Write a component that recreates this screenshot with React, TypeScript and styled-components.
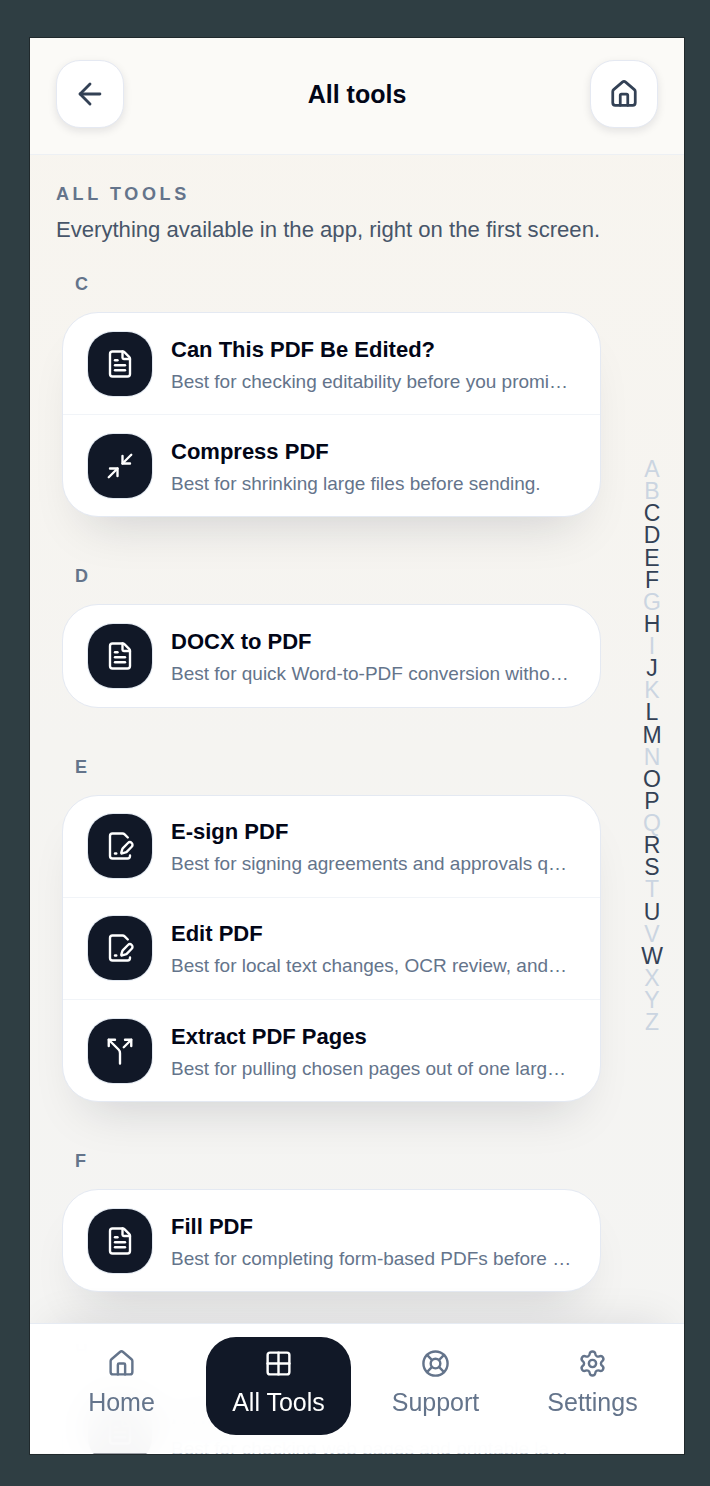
import { createGlobalStyle, styled } from "styled-components";
import {
  ArrowLeft,
  FilePenLine,
  FileText,
  Grid2x2,
  House,
  LifeBuoy,
  Minimize2,
  Settings,
  Split,
  type LucideIcon,
} from "lucide-react";

const GlobalStyle = createGlobalStyle`
  html, body {
    margin: 0;
    background: #2f3e43;
    font-family: "Liberation Sans", Arial, sans-serif;
  }
`;

const Page = styled.div`
  padding: 38px 26px 32px 30px;
`;

const Frame = styled.div`
  position: relative;
  height: 1416px;
  overflow: hidden;
  background: linear-gradient(180deg, #f8f5ef 0%, #f5f4f1 50%, #f4f4f3 100%);
  box-shadow: 0 0 0 1px #20292c;
`;

const Header = styled.header`
  height: 117px;
  box-sizing: border-box;
  padding: 0 26px 4px;
  display: flex;
  align-items: center;
  justify-content: space-between;
  background: #fbfaf7;
  border-bottom: 1.5px solid #edf0f4;
`;

const HeaderButton = styled.button`
  width: 68px;
  height: 68px;
  display: flex;
  align-items: center;
  justify-content: center;
  padding: 0;
  border: 1.5px solid #e5e9f2;
  border-radius: 24px;
  background: #fff;
  color: #334155;
  box-shadow: 0 3px 8px rgba(15, 23, 42, 0.1);
`;

const PageTitle = styled.h1`
  margin: 0;
  font-size: 25px;
  font-weight: 700;
  color: #020617;
`;

const Main = styled.main`
  padding: 28px 0 0 26px;
`;

const Eyebrow = styled.div`
  font-size: 18px;
  line-height: 22px;
  font-weight: 700;
  letter-spacing: 3.6px;
  color: #64748b;
`;

const Intro = styled.p`
  margin: 11px 0 0;
  font-size: 22.1px;
  line-height: 28px;
  color: #475569;
`;

const Sections = styled.div`
  margin-top: 30px;
  padding-left: 6px;
  width: 539px;
  display: flex;
  flex-direction: column;
  gap: 49px;
`;

const Section = styled.section`
  display: flex;
  flex-direction: column;
  gap: 18px;
`;

const SectionLabel = styled.div`
  padding-left: 13px;
  font-size: 18px;
  line-height: 20px;
  font-weight: 700;
  color: #64748b;
`;

const Card = styled.div<{ $raised?: boolean }>`
  border: 1.5px solid #e4e9f2;
  border-radius: 36px;
  background: #fff;
  box-shadow: ${(p) =>
    p.$raised ? "0 28px 50px -24px rgba(15, 23, 42, 0.17)" : "none"};
`;

const Row = styled.div`
  display: flex;
  align-items: center;
  gap: 19px;
  padding: 18.6px 28px 18.6px 25px;

  & + & {
    border-top: 1.5px solid #f1f4f8;
  }
`;

const IconTile = styled.div`
  flex: none;
  width: 64px;
  height: 64px;
  display: flex;
  align-items: center;
  justify-content: center;
  border-radius: 25px;
  background: #111827;
  color: #fff;
  box-shadow: 0 0 0 1px #e2e8f0;
`;

const RowText = styled.div`
  min-width: 0;
  flex: 1;
  padding-top: 3px;
  display: flex;
  flex-direction: column;
  gap: 6px;
`;

const RowTitle = styled.div`
  font-size: 22px;
  line-height: 26px;
  font-weight: 700;
  color: #020617;
`;

const RowDescription = styled.div`
  font-size: 19px;
  line-height: 25px;
  color: #64748b;
  white-space: nowrap;
  overflow: hidden;
  text-overflow: ellipsis;
`;

const Rail = styled.nav`
  position: absolute;
  top: 420px;
  right: 12px;
  width: 40px;
  display: flex;
  flex-direction: column;
  align-items: center;
`;

const RailLetter = styled.span<{ $active: boolean }>`
  font-size: 23px;
  line-height: 22.12px;
  color: ${(p) => (p.$active ? "#334155" : "#cbd5e1")};
`;

const BottomNav = styled.nav`
  position: absolute;
  left: 0;
  right: 0;
  bottom: 1px;
  height: 130px;
  box-sizing: border-box;
  padding: 12.5px 19px 0;
  display: grid;
  grid-template-columns: repeat(4, 1fr);
  gap: 12px;
  align-items: start;
  background: rgba(255, 255, 255, 0.96);
  backdrop-filter: blur(18px);
  border-top: 1.5px solid #e6ebf3;
  box-shadow: 0 -20px 40px -20px rgba(15, 23, 42, 0.1);

  &::after {
    content: "";
    position: absolute;
    left: 0;
    right: 0;
    bottom: -1px;
    height: 1px;
    background: rgba(255, 255, 255, 0.6);
  }
`;

const NavItem = styled.div<{ $active?: boolean }>`
  height: 98px;
  box-sizing: border-box;
  padding-top: 12px;
  display: flex;
  flex-direction: column;
  align-items: center;
  gap: 9px;
  border-radius: 30px;
  font-size: 25px;
  line-height: 30px;
  color: ${(p) => (p.$active ? "#fff" : "#64748b")};
  background: ${(p) => (p.$active ? "#111827" : "transparent")};
`;

type Tool = { icon: LucideIcon; title: string; description: string };
type Group = { letter: string; raised?: boolean; tools: Tool[] };

const groups: Group[] = [
  {
    letter: "C",
    raised: true,
    tools: [
      {
        icon: FileText,
        title: "Can This PDF Be Edited?",
        description: "Best for checking editability before you promise changes.",
      },
      {
        icon: Minimize2,
        title: "Compress PDF",
        description: "Best for shrinking large files before sending.",
      },
    ],
  },
  {
    letter: "D",
    tools: [
      {
        icon: FileText,
        title: "DOCX to PDF",
        description: "Best for quick Word-to-PDF conversion without extra steps.",
      },
    ],
  },
  {
    letter: "E",
    raised: true,
    tools: [
      {
        icon: FilePenLine,
        title: "E-sign PDF",
        description: "Best for signing agreements and approvals quickly on the go.",
      },
      {
        icon: FilePenLine,
        title: "Edit PDF",
        description: "Best for local text changes, OCR review, and cleanup.",
      },
      {
        icon: Split,
        title: "Extract PDF Pages",
        description: "Best for pulling chosen pages out of one large document.",
      },
    ],
  },
  {
    letter: "F",
    raised: true,
    tools: [
      {
        icon: FileText,
        title: "Fill PDF",
        description: "Best for completing form-based PDFs before sending them.",
      },
    ],
  },
  {
    letter: "H",
    tools: [
      {
        icon: FileText,
        title: "HTML to PDF",
        description: "Best for checking web pages and printable layouts offline.",
      },
    ],
  },
];

const activeLetters = "CDEFHJLMOPRSUW";
const alphabet = "ABCDEFGHIJKLMNOPQRSTUVWXYZ".split("");

const navItems = [
  { label: "Home", icon: House },
  { label: "All Tools", icon: Grid2x2, active: true },
  { label: "Support", icon: LifeBuoy },
  { label: "Settings", icon: Settings },
];

export default function App() {
  return (
    <Page>
      <GlobalStyle />
      <Frame>
        <Header>
          <HeaderButton aria-label="Back">
            <ArrowLeft size={34} strokeWidth={2} />
          </HeaderButton>
          <PageTitle>All tools</PageTitle>
          <HeaderButton aria-label="Home">
            <House size={30} strokeWidth={2.2} />
          </HeaderButton>
        </Header>
        <Main>
          <Eyebrow>ALL TOOLS</Eyebrow>
          <Intro>Everything available in the app, right on the first screen.</Intro>
          <Sections>
            {groups.map((group) => (
              <Section key={group.letter}>
                <SectionLabel>{group.letter}</SectionLabel>
                <Card $raised={group.raised}>
                  {group.tools.map(({ icon: Icon, title, description }) => (
                    <Row key={title}>
                      <IconTile>
                        <Icon size={30} strokeWidth={1.9} />
                      </IconTile>
                      <RowText>
                        <RowTitle>{title}</RowTitle>
                        <RowDescription>{description}</RowDescription>
                      </RowText>
                    </Row>
                  ))}
                </Card>
              </Section>
            ))}
          </Sections>
        </Main>
        <Rail>
          {alphabet.map((letter) => (
            <RailLetter key={letter} $active={activeLetters.includes(letter)}>
              {letter}
            </RailLetter>
          ))}
        </Rail>
        <BottomNav>
          {navItems.map(({ label, icon: Icon, active }) => (
            <NavItem key={label} $active={active}>
              <Icon size={29} strokeWidth={2} />
              {label}
            </NavItem>
          ))}
        </BottomNav>
      </Frame>
    </Page>
  );
}
